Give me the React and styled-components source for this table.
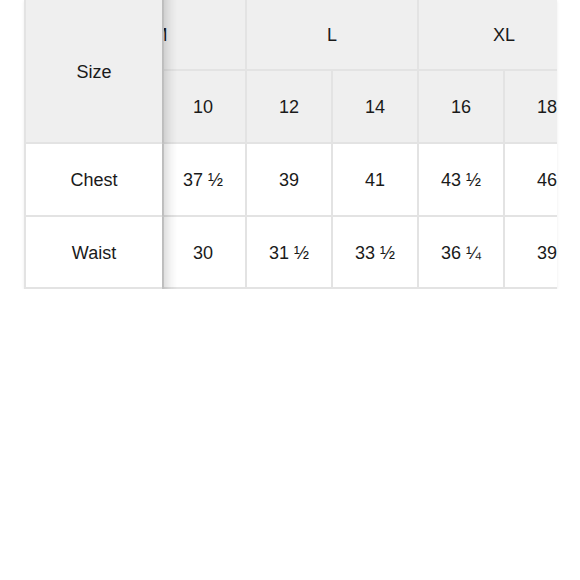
import React, { useLayoutEffect, useRef } from "react";
import styled, { createGlobalStyle, css } from "styled-components";

const Global = createGlobalStyle`
  html, body { margin: 0; padding: 0; background: #ffffff; }
  body { font-family: "Liberation Sans", Arial, sans-serif; color: #1a1a1a; }
`;

const Page = styled.div`
  padding: 0 23px 0 24px;
`;

const Scroller = styled.div`
  width: 533px;
  overflow-x: auto;
  overflow-y: hidden;
  scrollbar-width: none;
  box-shadow: 0 1px 3px rgba(0, 0, 0, 0.08);
  &::-webkit-scrollbar { display: none; }
`;

const Table = styled.table`
  border-collapse: separate;
  border-spacing: 0;
  font-size: 18px;
  table-layout: fixed;
`;

const cellBase = css`
  box-sizing: border-box;
  padding: 2px 0 0;
  text-align: center;
  vertical-align: middle;
  font-weight: 400;
  border-right: 2px solid #e3e3e3;
  border-bottom: 2px solid #e3e3e3;
  white-space: nowrap;
  width: 86px;
  min-width: 86px;
`;

const Head = styled.th`
  ${cellBase};
  background: #efefef;
  height: ${(p) => p.$h}px;
`;

const Cell = styled.td`
  ${cellBase};
  background: #ffffff;
  height: ${(p) => p.$h}px;
`;

const stickyStyle = css`
  position: sticky;
  left: 0;
  z-index: 2;
  width: 140px;
  min-width: 140px;
  border-left: 2px solid #e3e3e3;
  border-right-color: #dcdcdc;
  &::after {
    content: "";
    position: absolute;
    top: 0;
    bottom: -2px;
    left: 100%;
    width: 15px;
    background: linear-gradient(to right, rgba(0, 0, 0, 0.15), rgba(0, 0, 0, 0.04) 60%, rgba(0, 0, 0, 0));
    pointer-events: none;
  }
`;

const StickyHead = styled(Head)`
  ${stickyStyle};
`;

const StickyCell = styled(Cell)`
  ${stickyStyle};
`;

const groups = [
  { name: "M", sizes: ["8", "10"] },
  { name: "L", sizes: ["12", "14"] },
  { name: "XL", sizes: ["16", "18"] },
];

const rows = [
  { label: "Chest", values: ["36", "37 ½", "39", "41", "43 ½", "46"], h: 73 },
  { label: "Waist", values: ["28 ½", "30", "31 ½", "33 ½", "36 ¼", "39"], h: 72 },
];

export default function App() {
  const ref = useRef(null);
  useLayoutEffect(() => {
    if (ref.current) ref.current.scrollLeft = 89;
  }, []);

  return (
    <Page>
      <Global />
      <Scroller ref={ref}>
        <Table>
          <thead>
            <tr>
              <StickyHead rowSpan={2} $h={71}>Size</StickyHead>
              {groups.map((g) => (
                <Head key={g.name} colSpan={g.sizes.length} $h={71}>
                  {g.name}
                </Head>
              ))}
            </tr>
            <tr>
              {groups.flatMap((g) =>
                g.sizes.map((s) => (
                  <Head key={s} $h={73}>
                    {s}
                  </Head>
                ))
              )}
            </tr>
          </thead>
          <tbody>
            {rows.map((r) => (
              <tr key={r.label}>
                <StickyCell $h={r.h}>{r.label}</StickyCell>
                {r.values.map((v, i) => (
                  <Cell key={i} $h={r.h}>
                    {v}
                  </Cell>
                ))}
              </tr>
            ))}
          </tbody>
        </Table>
      </Scroller>
    </Page>
  );
}
